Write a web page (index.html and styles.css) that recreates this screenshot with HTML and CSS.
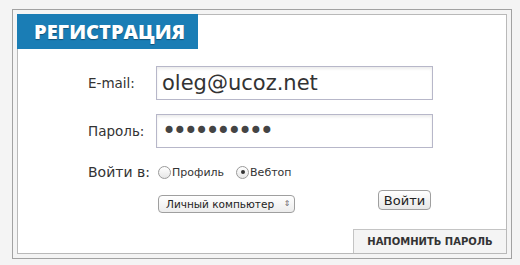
FILE: index.html
```html
<!DOCTYPE html>
<html lang="ru">
<head>
  <meta charset="UTF-8">
  <title>Регистрация</title>
  <link rel="stylesheet" href="styles.css">
</head>
<body>
  <div class="frame">
    <div class="box">
      <h2 class="title">РЕГИСТРАЦИЯ</h2>

      <form class="form">
        <label class="label" for="email">E-mail:</label>
        <input type="text" id="email" class="textbox" value="oleg@ucoz.net">

        <label class="label" for="pass">Пароль:</label>
        <input type="password" id="pass" class="textbox pass" value="1234567890">

        <span class="label big">Войти в:</span>
        <div class="radios">
          <label class="radio"><input type="radio" name="where"> Профиль</label>
          <label class="radio"><input type="radio" name="where" checked> Вебтоп</label>
        </div>

        <span></span>
        <div class="actions">
          <div class="select">Личный компьютер <span class="arrows">&#8661;</span></div>
          <button type="button" class="button">Войти</button>
        </div>
      </form>

      <div class="bottom">
        <a href="#" class="remind">НАПОМНИТЬ ПАРОЛЬ</a>
      </div>
    </div>
  </div>
</body>
</html>
```

FILE: styles.css
```css
body {
  margin: 0;
  padding: 9px 0 0 12px;
  background-color: #f4f4f4;
  font-family: "DejaVu Sans", Verdana, sans-serif;
  color: #333;
}
.frame {
  box-sizing: border-box;
  width: 500px;
  height: 250px;
  border: 1px solid #a2a2a2;
  padding: 4px;
}
.box {
  box-sizing: border-box;
  height: 100%;
  border: 1px solid #b9b9b9;
  background: #fff;
  display: flex;
  flex-direction: column;
}
.title {
  margin: -1px 0 0 -1px;
  width: 181px;
  height: 35px;
  box-sizing: border-box;
  padding: 0 0 0 17px;
  background-color: #1a7db5;
  color: #fff;
  font-family: "Open Sans", sans-serif;
  font-weight: 800;
  font-size: 20px;
  line-height: 36px;
  text-shadow: 0 1px 1px rgba(0, 0, 0, 0.35);
}
.form {
  display: grid;
  grid-template-columns: 68px 277px;
  align-items: center;
  row-gap: 14px;
  margin: 17px 0 0 70px;
}
.label {
  font-size: 13.5px;
  color: #333;
}
.label.big {
  font-size: 14px;
  white-space: nowrap;
}
.textbox {
  box-sizing: border-box;
  width: 277px;
  height: 34px;
  margin: 0;
  padding: 0 5px;
  border: 1px solid #b7b7c9;
  box-shadow: inset 0 2px 3px rgba(0, 0, 0, 0.08);
  font-family: "DejaVu Sans", Verdana, sans-serif;
  font-size: 21px;
  color: #333;
  outline: none;
}
.pass {
  font-size: 24px;
  letter-spacing: -3.3px;
  color: #444;
}
.radios {
  display: flex;
  gap: 10px;
  font-size: 11px;
  height: 20px;
  align-items: center;
}
.radio {
  display: flex;
  align-items: center;
}
.radio input {
  appearance: none;
  width: 13px;
  height: 13px;
  margin: 0 1px 0 2px;
  border: 1px solid #9a9a9a;
  border-radius: 50%;
  background: linear-gradient(#fff, #e6e6e6);
  display: grid;
  place-content: center;
}
.radio input:checked::before {
  content: "";
  width: 4px;
  height: 4px;
  border-radius: 50%;
  background: #333;
}
.actions {
  display: flex;
  justify-content: space-between;
  align-items: flex-start;
  margin-top: -6px;
  padding-right: 2px;
}
.select {
  box-sizing: border-box;
  width: 137px;
  height: 18px;
  margin: 5px 0 0 2px;
  padding: 0 0 0 7px;
  border: 1px solid #9f9f9f;
  border-radius: 4px;
  background: linear-gradient(#fff, #ececec);
  font-size: 10.5px;
  line-height: 16px;
  white-space: nowrap;
  color: #222;
  display: flex;
  justify-content: space-between;
}
.arrows {
  font-size: 8px;
  color: #666;
  width: 14px;
  text-align: center;
}
.button {
  width: 53px;
  height: 20px;
  padding: 0;
  border: 1px solid #9f9f9f;
  border-radius: 4px;
  background: linear-gradient(#fff, #e8e8e8);
  font-family: "DejaVu Sans", Verdana, sans-serif;
  font-size: 13px;
  color: #222;
  cursor: pointer;
}
.bottom {
  margin-top: auto;
  display: flex;
  justify-content: flex-end;
}
.remind {
  box-sizing: border-box;
  width: 153px;
  height: 24px;
  border-top: 1px solid #c4c4c4;
  border-left: 1px solid #c4c4c4;
  background-color: #f4f4f4;
  font-size: 10px;
  font-weight: bold;
  line-height: 23px;
  text-align: center;
  color: #333;
  text-decoration: none;
}
```
